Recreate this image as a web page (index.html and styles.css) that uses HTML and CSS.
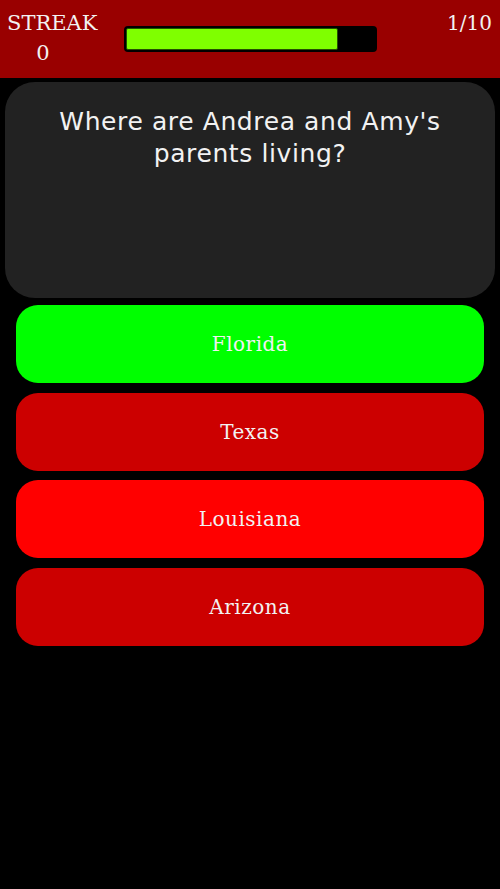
FILE: index.html
```html
<!DOCTYPE html>
<html lang="en">
<head>
    <meta charset="UTF-8">
    <meta name="viewport" content="width=device-width, initial-scale=1.0">
    <title>Quiz</title>
    <link rel="stylesheet" href="styles.css">
</head>
<body>
    <div class="topbar">
        <div class="streak">
            <div>STREAK</div>
            <div class="streak-num">0</div>
        </div>
        <div class="progress">
            <div class="fill" style="width: 85%"></div>
        </div>
        <div class="count">1/10</div>
    </div>
    <div class="question">
        <p>Where are Andrea and Amy's parents living?</p>
    </div>
    <div class="answers">
        <button class="answer correct">Florida</button>
        <button class="answer">Texas</button>
        <button class="answer picked">Louisiana</button>
        <button class="answer">Arizona</button>
    </div>
</body>
</html>
```

FILE: styles.css
```css
body {
    margin: 0;
    background-color: #000;
    font-family: 'DejaVu Serif', serif;
    color: #f2f2f2;
}
.topbar {
    background-color: #990000;
    height: 78px;
    display: flex;
    align-items: flex-start;
    box-sizing: border-box;
    padding: 8px 8px 0 7px;
}
.streak {
    font-size: 21px;
    line-height: 30px;
    width: 89px;
}
.streak-num {
    width: 72px;
    text-align: center;
}
.progress {
    margin: 18px 0 0 28px;
    width: 253px;
    height: 26px;
    padding: 2px;
    box-sizing: border-box;
    background-color: #000;
    border-radius: 4px;
}
.fill {
    height: 100%;
    background-color: #7fff00;
    border: 1px solid #245000;
    box-sizing: border-box;
    border-radius: 2px;
}
.count {
    margin-left: auto;
    font-size: 20px;
    line-height: 30px;
}
.question {
    margin: 4px 5px 0 5px;
    height: 216px;
    background-color: #222;
    border-radius: 30px;
    box-sizing: border-box;
    padding: 24px 20px;
}
.question p {
    margin: 0;
    font-family: 'DejaVu Sans', sans-serif;
    font-size: 25px;
    letter-spacing: 0.6px;
    line-height: 32px;
    text-align: center;
    color: #f2f2f2;
}
.answers {
    display: flex;
    flex-direction: column;
    gap: 9.5px;
    padding: 7px 16px;
}
.answer {
    height: 78px;
    border: none;
    border-radius: 22px;
    background-color: #cc0000;
    color: #f2f2f2;
    font-family: 'DejaVu Serif', serif;
    font-size: 20px;
    letter-spacing: 0.5px;
}
.answer.correct {
    background-color: #00ff00;
}
.answer.picked {
    background-color: #ff0000;
}
```
